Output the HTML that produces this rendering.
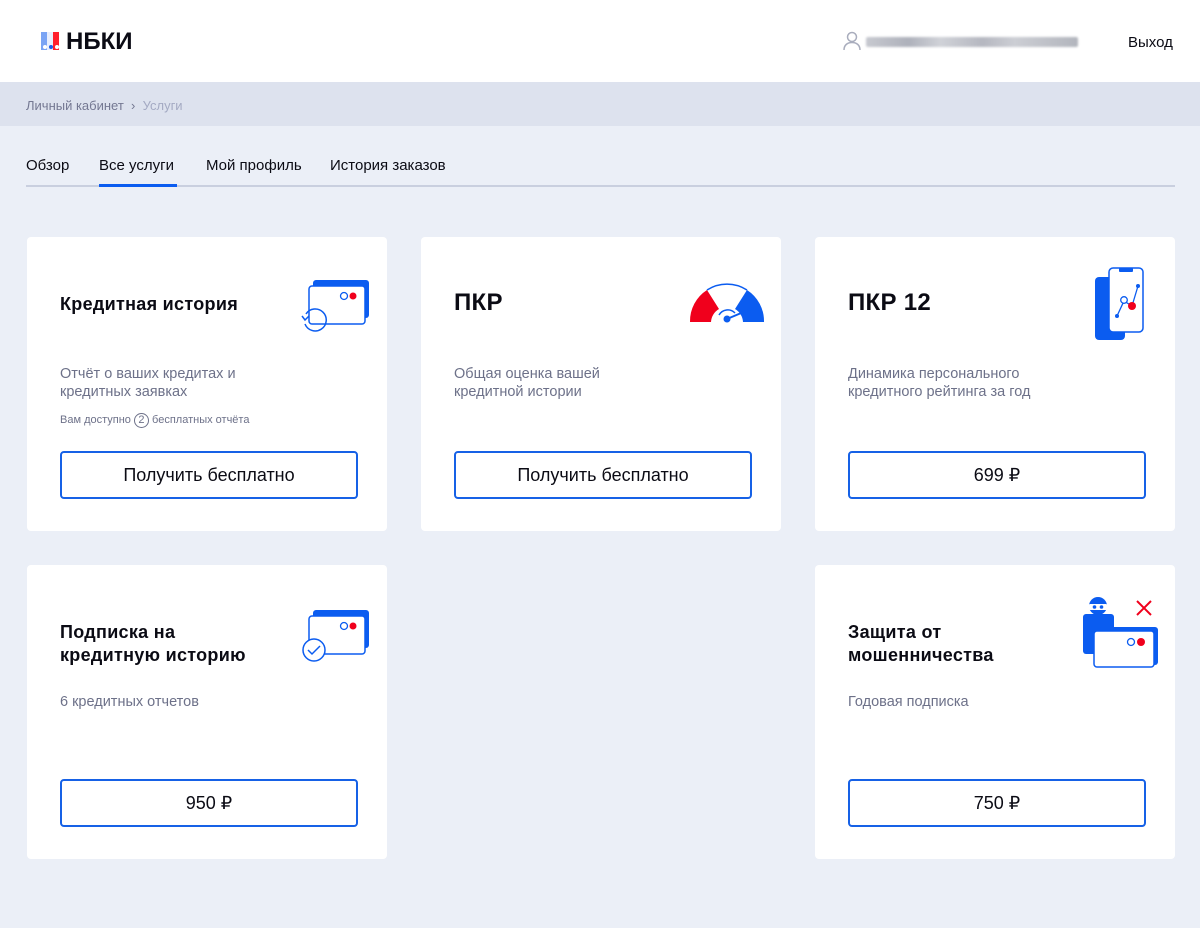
<!DOCTYPE html>
<html><head><meta charset="utf-8"><style>
*{margin:0;padding:0;box-sizing:border-box}
body{width:1200px;height:928px;background:#ebeff7;font-family:"Liberation Sans",sans-serif;color:#0b0b14;position:relative;overflow:hidden}
.hdr{position:absolute;left:0;top:0;width:1200px;height:82px;background:#fff}
.bc{position:absolute;left:0;top:82px;width:1200px;height:44px;background:#dde2ee;font-size:13px;color:#747892;padding:16px 26px}
.bc span{color:#a4aac3}
.tabs{position:absolute;left:26px;top:157px;width:1149px;height:30px;border-bottom:2px solid #c9cfdf;font-size:15px}
.tabs div{position:absolute;top:0}
.act{border-bottom:3px solid #0b5cf0;height:30px}
.card{position:absolute;background:#fff;border-radius:4px;width:360px;height:294px}
.t{position:absolute;left:33px;top:56px;font-size:18px;font-weight:bold;line-height:23px;letter-spacing:.3px}
.d{position:absolute;left:33px;top:128px;font-size:14.5px;color:#6d7189;line-height:18px}
.btn{position:absolute;left:33px;top:214px;width:298px;height:48px;border:2px solid #1661e6;border-radius:4px;text-align:center;line-height:44px;font-size:18px}
svg{position:absolute}
</style></head><body>
<div class="hdr">
<svg style="left:41px;top:32px" width="19" height="18" viewBox="0 0 19 18"><rect x="0" y="0" width="6" height="18" fill="#7aa4f4"/><rect x="6" y="0" width="6" height="18" fill="#e8eefc"/><rect x="12" y="0" width="6" height="18" fill="#ff1f2c"/><circle cx="4" cy="15" r="2" fill="#fff"/><circle cx="10" cy="15" r="2" fill="#1b5de8"/><circle cx="16" cy="15" r="2" fill="#fff"/></svg>
<div style="position:absolute;left:66px;top:28px;font-size:24px;font-weight:bold">НБКИ</div>
<svg style="left:843px;top:31px" width="18" height="20" viewBox="0 0 18 20"><circle cx="9" cy="6" r="4.5" fill="none" stroke="#a9adbd" stroke-width="1.5"/><path d="M1 19c0-5 3.5-7.5 8-7.5s8 2.5 8 7.5" fill="none" stroke="#a9adbd" stroke-width="1.5"/></svg>
<div style="position:absolute;left:866px;top:37px;width:212px;height:10px;background:linear-gradient(90deg,#c7c9d0,#aeb1bb 20%,#d0d2d8 35%,#b5b7c0 55%,#ccced4 70%,#b2b5bd);border-radius:2px;filter:blur(1px)"></div>
<div style="position:absolute;left:1128px;top:34px;font-size:15px">Выход</div>
</div>
<div class="bc">Личный кабинет &nbsp;›&nbsp; <span>Услуги</span></div>
<div class="tabs"><div style="left:0">Обзор</div><div class="act" style="left:73px;width:78px">Все услуги</div><div style="left:180px">Мой профиль</div><div style="left:304px">История заказов</div></div>

<div class="card" style="left:27px;top:237px">
<div class="t" style="top:56px">Кредитная история</div>
<div class="d">Отчёт о ваших кредитах и<br>кредитных заявках</div>
<div style="position:absolute;left:33px;top:176px;font-size:11px;color:#6d7189">Вам доступно <span style="display:inline-block;width:15px;height:15px;border:1px solid #6d7189;border-radius:50%;text-align:center;line-height:13px;font-size:11px">2</span> бесплатных отчёта</div>
<div class="btn">Получить бесплатно</div>
<svg style="left:265px;top:40px" width="80" height="55" viewBox="0 0 80 55"><rect x="21" y="3" width="56" height="38" rx="3" fill="#0b5cf0"/><rect x="17" y="9" width="56" height="38" rx="3" fill="#fff" stroke="#0b5cf0" stroke-width="1.5"/><circle cx="52" cy="19" r="3.5" fill="none" stroke="#0b5cf0" stroke-width="1.3"/><circle cx="61" cy="19" r="3.5" fill="#f0001c"/><path d="M14 37a11 11 0 1 1 -1 10" fill="none" stroke="#0b5cf0" stroke-width="1.5"/><path d="M10 39l3 4 4-4" fill="none" stroke="#0b5cf0" stroke-width="1.5"/></svg>
</div>

<div class="card" style="left:421px;top:237px">
<div class="t" style="font-size:24px;top:54px">ПКР</div>
<div class="d">Общая оценка вашей<br>кредитной истории</div>
<div class="btn">Получить бесплатно</div>
<svg style="left:268px;top:45px" width="76" height="42" viewBox="0 0 76 42"><path d="M1 40A37 37 0 0 1 18 8L30 27A16 16 0 0 0 22 40Z" fill="#f0001c"/><path d="M75 40A37 37 0 0 0 58 8L46 27A16 16 0 0 1 54 40Z" fill="#0b5cf0"/><path d="M18 8A37 37 0 0 1 58 8" fill="none" stroke="#0b5cf0" stroke-width="1.5"/><path d="M30 33a10 10 0 0 1 16 -2" fill="none" stroke="#0b5cf0" stroke-width="1.5"/><path d="M38 37L64 26" stroke="#0b5cf0" stroke-width="2"/><circle cx="38" cy="37" r="3.5" fill="#0b5cf0"/></svg>
</div>

<div class="card" style="left:815px;top:237px">
<div class="t" style="font-size:24px;top:54px">ПКР 12</div>
<div class="d">Динамика персонального<br>кредитного рейтинга за год</div>
<div class="btn">699 ₽</div>
<svg style="left:278px;top:28px" width="54" height="76" viewBox="0 0 54 76"><rect x="2" y="12" width="30" height="63" rx="4" fill="#0b5cf0"/><rect x="16" y="3" width="34" height="64" rx="4" fill="#fff" stroke="#0b5cf0" stroke-width="1.5"/><rect x="26" y="3" width="14" height="4" rx="1" fill="#0b5cf0"/><path d="M24 51L31 36L39 41L45 21" fill="none" stroke="#0b5cf0" stroke-width="1.3"/><circle cx="24" cy="51" r="2" fill="#0b5cf0"/><circle cx="31" cy="35" r="3.3" fill="#fff" stroke="#0b5cf0" stroke-width="1.3"/><circle cx="39" cy="41" r="4" fill="#f0001c"/><circle cx="45" cy="21" r="2" fill="#0b5cf0"/></svg>
</div>

<div class="card" style="left:27px;top:565px">
<div class="t">Подписка на<br>кредитную историю</div>
<div class="d">6 кредитных отчетов</div>
<div class="btn">950 ₽</div>
<svg style="left:273px;top:40px" width="75" height="60" viewBox="0 0 75 60"><rect x="13" y="5" width="56" height="38" rx="3" fill="#0b5cf0"/><rect x="9" y="11" width="56" height="38" rx="3" fill="#fff" stroke="#0b5cf0" stroke-width="1.5"/><circle cx="44" cy="21" r="3.5" fill="none" stroke="#0b5cf0" stroke-width="1.3"/><circle cx="53" cy="21" r="3.5" fill="#f0001c"/><circle cx="14" cy="45" r="11" fill="#fff" stroke="#0b5cf0" stroke-width="1.5"/><path d="M8 45l4 4 8-8" fill="none" stroke="#0b5cf0" stroke-width="1.5"/></svg>
</div>

<div class="card" style="left:815px;top:565px">
<div class="t">Защита от<br>мошенничества</div>
<div class="d">Годовая подписка</div>
<div class="btn">750 ₽</div>
<svg style="left:267px;top:30px" width="78" height="75" viewBox="0 0 78 75"><circle cx="16" cy="11" r="9" fill="#0b5cf0"/><rect x="7" y="9" width="18" height="6" rx="1" fill="#fff"/><circle cx="12.5" cy="12" r="1.8" fill="#0b5cf0"/><circle cx="19.5" cy="12" r="1.8" fill="#0b5cf0"/><rect x="1" y="19" width="31" height="40" rx="3" fill="#0b5cf0"/><rect x="16" y="32" width="60" height="38" rx="3" fill="#0b5cf0"/><rect x="12" y="36" width="60" height="36" rx="3" fill="#fff" stroke="#0b5cf0" stroke-width="1.5"/><circle cx="49" cy="47" r="3.5" fill="none" stroke="#0b5cf0" stroke-width="1.3"/><circle cx="59" cy="47" r="4" fill="#f0001c"/><path d="M55 6l14 14M69 6L55 20" stroke="#f0001c" stroke-width="2"/></svg>
</div>
</body></html>
